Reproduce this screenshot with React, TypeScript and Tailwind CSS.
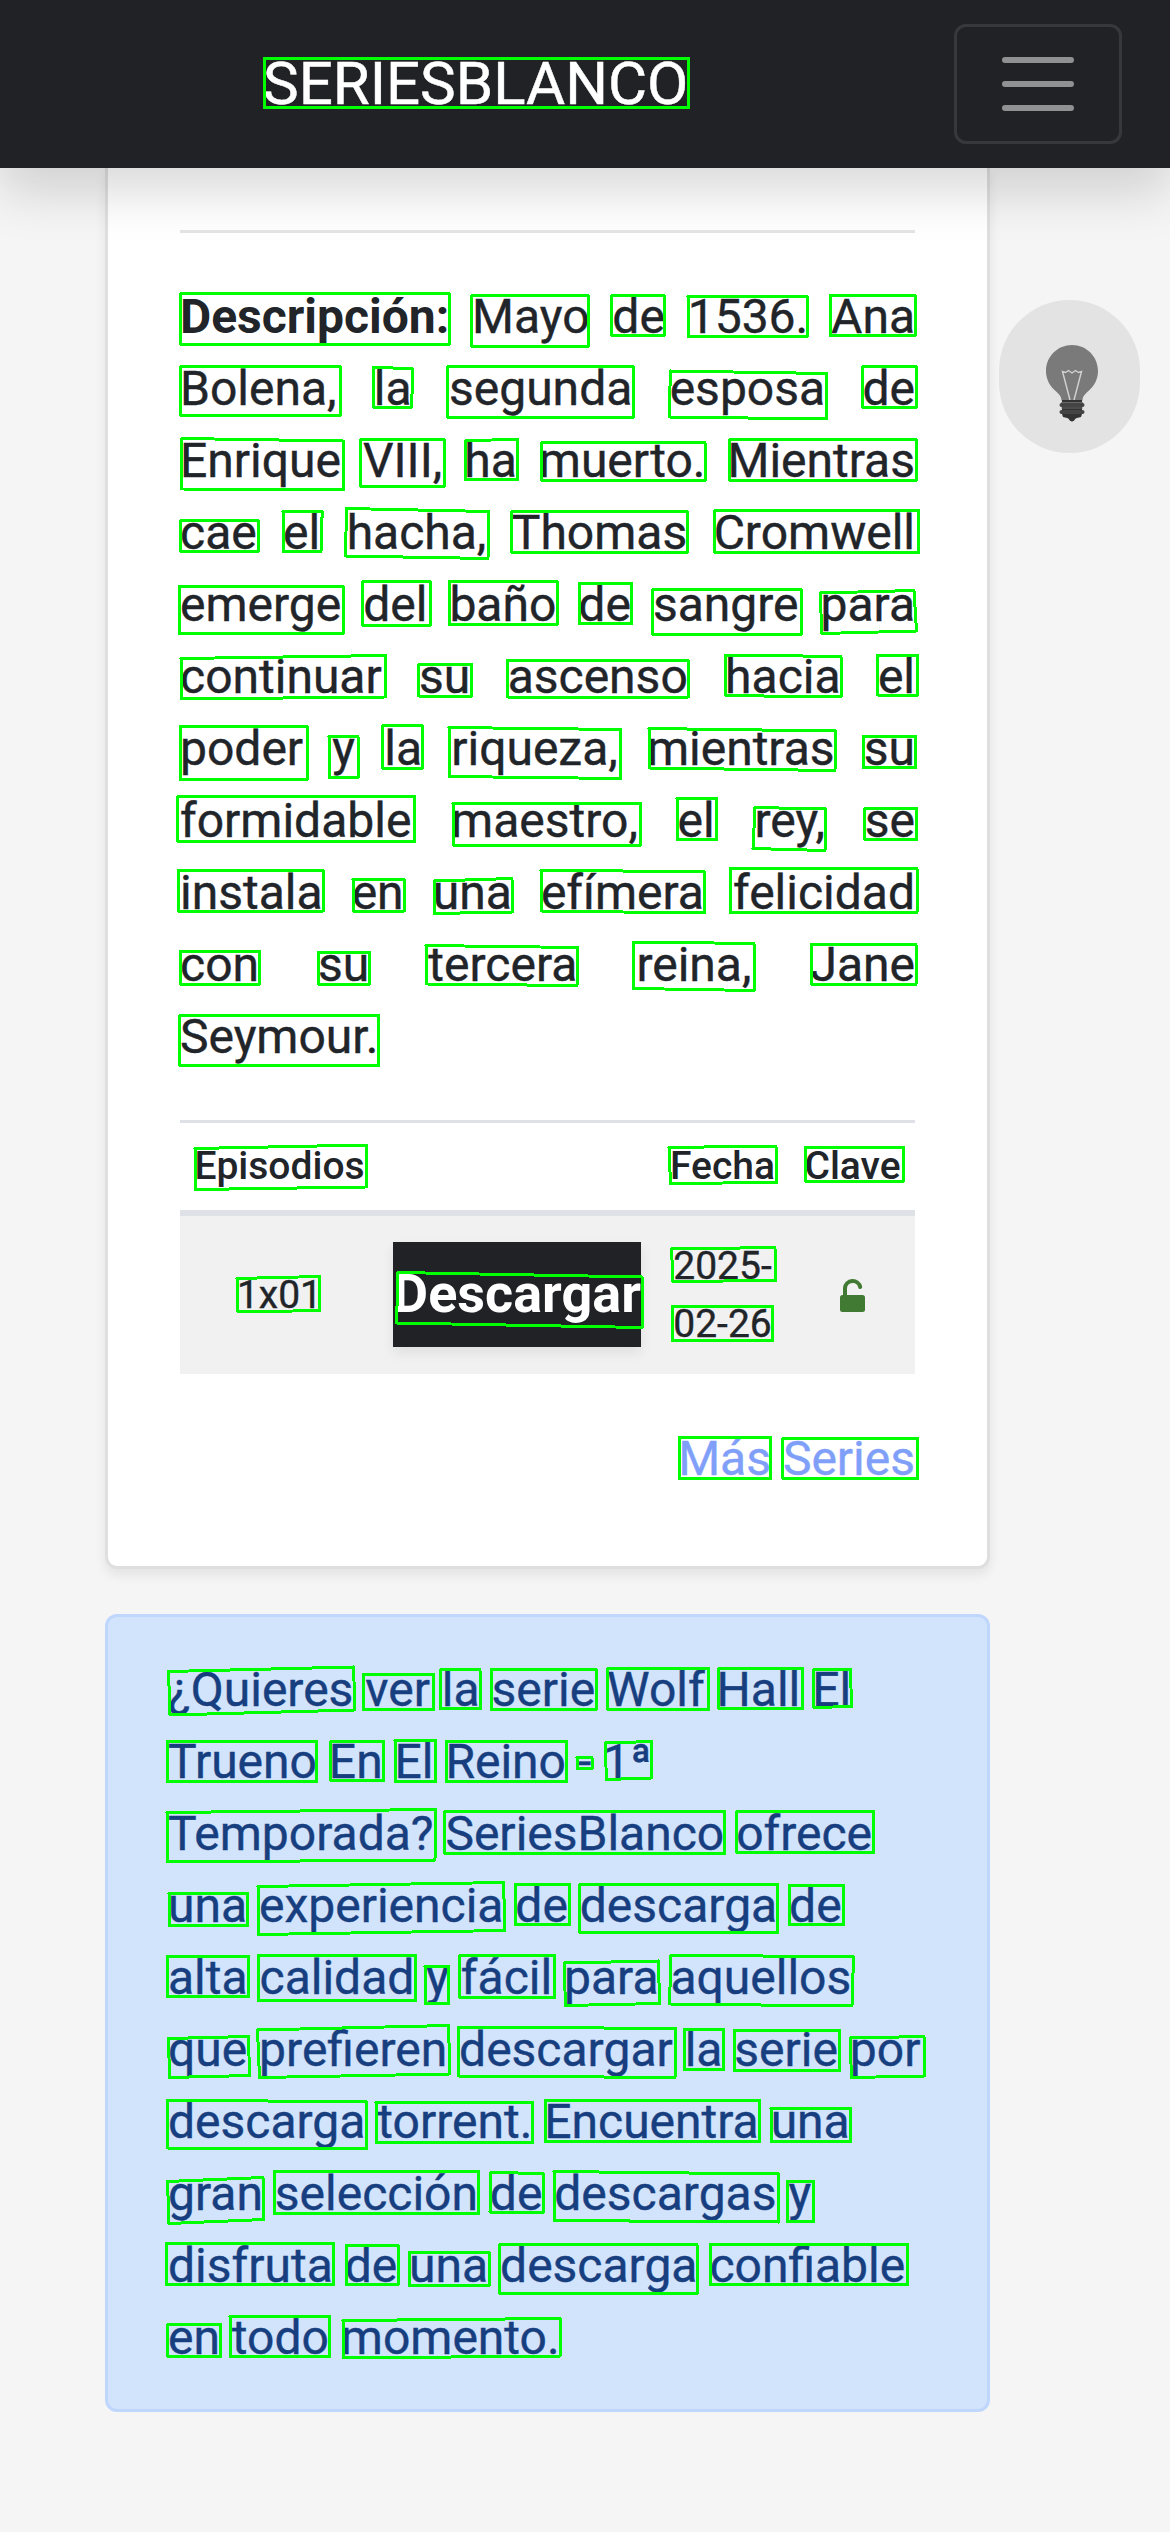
const BOXES: number[][] = [
  [264.2, 58.5, 688.7, 107.5],
  [180.8, 293.5, 449.2, 344.5], [471.8, 295.5, 588.2, 346.2], [611.7, 295.5, 664.3, 335.5], [688, 296.5, 807.2, 336.5], [830.5, 295.5, 915.1, 335.5],
  [180.8, 366.8, 340.2, 415.2], [373, 367, 413, 369, 411.5, 407, 373, 407], [447.8, 366.8, 633.2, 417.2], [670.5, 371, 826.4, 373.5, 826.4, 419, 669, 417], [862.9, 366.8, 916.2, 407.2],
  [181.8, 438.5, 343.2, 441, 343.2, 490, 181.8, 489], [360.8, 439.5, 444.2, 486.5], [466, 440.5, 517.5, 439.5, 517.5, 479.5, 465.5, 479.5], [541.8, 442.8, 705, 480.5], [729.8, 439.5, 916.2, 480.5],
  [180.8, 520.5, 258.2, 551.5], [283, 511.5, 322.2, 511.5, 321, 552, 283, 551.5], [346.5, 508.5, 489, 511.5, 488, 558.5, 345.5, 556], [511.8, 511.5, 687.2, 552.5], [714.9, 510.2, 918.4, 552.5],
  [179.5, 586.5, 343.2, 633.5], [362.8, 581.5, 430.2, 625.2], [449.5, 581.5, 557.2, 624.5], [579.5, 583.5, 631.8, 623.5], [652.8, 589.5, 801.3, 634.5], [820, 593, 914, 590.5, 916.5, 631, 822, 633.5],
  [181, 658.5, 385.5, 655.5, 385.5, 697, 181, 699], [418.8, 664.5, 471.5, 696], [507.5, 660.5, 688.3, 697], [725.8, 655, 841, 656.5, 841, 697, 725.8, 695.5], [877.8, 655, 917.7, 695],
  [180.4, 726.5, 307.2, 779.5], [329, 736.5, 358, 777.5], [382.9, 725.5, 422.1, 768.5], [449, 727.5, 620.6, 729.5, 620.6, 778.5, 449, 776.5], [649, 728.5, 835.5, 731, 835, 770.5, 649, 768], [863.4, 736.5, 915.6, 767.5],
  [177.9, 796.5, 414.7, 841.5], [453, 803.5, 640.5, 845], [677, 798.5, 716.6, 839.5], [755, 807.5, 826, 809, 825, 850.5, 753, 848.5], [864.9, 808.5, 916.6, 839.5],
  [178.4, 870.5, 323.2, 911], [353, 879.5, 404.2, 911], [434.5, 881, 512, 878.5, 512.5, 912, 434.5, 913.5], [541, 870.5, 704.2, 871.5, 704.2, 913, 541, 911], [730, 868.8, 917, 912.2],
  [180.4, 951.5, 259.5, 984.2], [318.2, 952.5, 369.4, 984.2], [426, 945.5, 578, 947.5, 577, 985.5, 426, 984], [633.6, 942, 754, 943.5, 754, 990.5, 633.6, 988.5], [811.2, 944.5, 916, 984.2],
  [179.9, 1015.5, 378.9, 1065.5],
  [195, 1148.5, 366.4, 1145, 366.4, 1187, 195, 1189.5], [669, 1147.5, 776, 1146, 776.8, 1182.5, 670.5, 1183.5], [805.2, 1147.5, 903.7, 1181],
  [237, 1278.5, 319.5, 1276.5, 320, 1310.5, 238, 1312], [398, 1272.5, 642, 1277, 642, 1327.5, 396.5, 1323], [671.5, 1249, 775, 1247.5, 775.5, 1280.5, 673, 1281.5], [672.5, 1306.5, 772.5, 1340.5],
  [679.4, 1437.5, 770.9, 1478.5], [782.7, 1438.5, 917.6, 1478.5],
  [168.5, 1671.5, 353.5, 1667, 355, 1710, 170, 1715], [363.5, 1674.5, 433.5, 1709.5], [441, 1669, 480, 1669, 480.5, 1708.5, 440.5, 1708.5], [491.5, 1669.5, 596.2, 1709.5], [607.8, 1668.5, 708.5, 1709.5], [718.8, 1668.5, 802.5, 1708.5], [814, 1669.5, 850.5, 1669.5, 851.5, 1706.5, 813.8, 1707.5],
  [167.5, 1741.5, 316.5, 1781.8], [330.8, 1741.5, 383.8, 1780.5], [395, 1740.5, 435.5, 1781.5], [446.5, 1741.5, 566.5, 1781.5], [577, 1757.5, 592, 1768.5], [605, 1743, 651.5, 1741.5, 651.5, 1778, 606.5, 1779.5],
  [167, 1812.5, 435.5, 1809.5, 435, 1860, 167, 1862], [444.8, 1811.5, 724.5, 1853.5], [736.8, 1811.5, 873.5, 1852.5],
  [169, 1893.5, 247.5, 1925.5], [258, 1886.5, 503.5, 1882.5, 505, 1930.5, 258, 1934.5], [515.5, 1884.5, 569.5, 1924.5], [579.8, 1884.5, 777.5, 1932.5], [789.5, 1885.5, 843.5, 1924.5],
  [167.5, 1956.5, 248.5, 1996.5], [258.5, 1955.2, 415.5, 2000.5], [425, 1966.5, 448.5, 2003.5], [459.8, 1955.2, 554.5, 1997.5], [564, 1963, 658.5, 1961, 659.5, 2003.5, 565.5, 2005.5], [671, 1955, 853.5, 1957, 852, 2006, 669.5, 2004],
  [168.5, 2038.5, 248.5, 2036.5, 249.5, 2075.5, 169.5, 2077.5], [257.5, 2030, 448.5, 2025.5, 450, 2074, 259.5, 2077.5], [458.8, 2027, 676, 2028.5, 675, 2077.5, 458.8, 2076], [684, 2029, 723.5, 2069.5], [734.5, 2030.5, 839.5, 2070.5], [850, 2038, 924, 2036.5, 925, 2076, 851.5, 2077.5],
  [167.8, 2100, 366.6, 2102, 366.6, 2149, 167.8, 2148], [376, 2102.5, 532.7, 2142.5], [545.6, 2100.5, 759.7, 2141.5], [771, 2108.5, 850.7, 2141.5],
  [167.5, 2181.5, 263, 2177.5, 264, 2219.5, 169, 2223.5], [274.6, 2171.5, 478.7, 2213.5], [491, 2172.5, 543.2, 2173.5, 543.2, 2212.5, 490, 2212], [554, 2171.5, 779, 2174, 778.5, 2222, 554, 2220.5], [787.4, 2181.5, 813.7, 2221.5],
  [166.6, 2243.5, 333.8, 2284.5], [346.2, 2245.5, 398.3, 2284.5], [409.5, 2252.5, 489.3, 2285.5], [499.9, 2244.5, 697, 2293.5], [710.5, 2244.5, 907.6, 2284.5],
  [167.8, 2324.5, 220.5, 2356.5], [230, 2316.5, 329.7, 2356.5], [343, 2320.5, 560, 2318.5, 560, 2356, 343, 2358],
];

function toPoints(b: number[]) {
  return (b.length === 4 ? [b[0], b[1], b[2], b[1], b[2], b[3], b[0], b[3]] : b).join(" ");
}

/** Outlines drawn over each detected word. */
function WordBoxes() {
  return (
    <svg className="pointer-events-none absolute top-0 left-0 z-30" width="1170" height="2532" viewBox="0 0 1170 2532" fill="none" stroke="#00ff00" strokeWidth="3" strokeLinejoin="round" shapeRendering="crispEdges">
      {BOXES.map((b, i) => (
        <polygon key={i} points={toPoints(b)} />
      ))}
    </svg>
  );
}

function Header() {
  return (
    <header className="relative z-10 flex h-[168px] items-center justify-between bg-[#212226] pr-12 pl-[263px] shadow-[0_24px_48px_rgba(0,0,0,0.15)]">
      <a className="text-[60px] leading-[90px] text-white [-webkit-text-stroke:0.5px]">SERIESBLANCO</a>
      <button className="flex h-[120px] w-[168px] items-center justify-center rounded-xl border-[3px] border-white/10">
        <svg width="90" height="90" viewBox="0 0 30 30" fill="none" stroke="#909193" strokeWidth="2" strokeLinecap="round">
          <path d="M4 7h22M4 15h22M4 23h22" />
        </svg>
      </button>
    </header>
  );
}

function Bulb() {
  return (
    <button className="absolute top-[300px] left-[999px] flex h-[153px] w-[141px] justify-center rounded-full bg-[#e3e3e3] pt-[45px] pl-[4px]">
      <svg width="52" height="77" viewBox="0 0 52 77" fill="none">
        <path d="M26 0C11.500 0 0 11.500 0 26c0 8 3.500 14.500 9 19.500 4 3.500 6.500 6 6.500 10h21c0-4 2.500-6.500 6.500-10 5.500-5 9-11.500 9-19.500C52 11.500 40.500 0 26 0z" fill="#7a7a7a" />
        <path d="M24 55 16.500 26.500l3 1 3-2 3.500 2.500 3.500-2.500 3 2 3-1L28 55" stroke="#d2d2d2" strokeWidth="1.400" />
        <path d="M16 55h20v14l-1 3-4 1c-2 0-2.500 3.500-5 3.500s-3-3.500-5-3.500l-4-1-1-3z" fill="#333" />
        <rect x="13.500" y="58" width="25" height="4" rx="2" fill="#444" />
        <rect x="13.500" y="65" width="25" height="4" rx="2" fill="#444" />
        <path d="M15 57.500h22M15 63h22" stroke="#777" strokeWidth="0.800" />
      </svg>
    </button>
  );
}

function Episodes() {
  return (
    <div className="mt-[47.5px] text-center text-[39px] leading-[58.5px]">
      <div className="grid grid-cols-[199px_276px_135px_125px] border-t-[3px] border-b-[6px] border-[#dee2e6] pt-[14px] pb-[14.5px] font-medium">
        <div>Episodios</div>
        <div />
        <div>Fecha</div>
        <div>Clave</div>
      </div>
      <div className="grid h-[158px] grid-cols-[199px_276px_135px_125px] items-center bg-[#f1f1f1] [-webkit-text-stroke:0.4px]">
        <div>1x01</div>
        <div className="mb-[1px] ml-[14px] flex h-[105px] w-[248px] items-center justify-center bg-[#212226] text-[54px] font-bold text-white shadow-[0_6px_12px_rgba(0,0,0,0.075)] [-webkit-text-stroke:0]">Descargar</div>
        <div>2025-<br />02-26</div>
        <div className="flex justify-center">
          <svg width="25" height="34" viewBox="0 0 25 34" fill="none">
            <rect y="17" width="25" height="17" rx="2.500" fill="#417a33" />
            <path d="M5 18V10a7.700 7.700 0 0 1 15.200-1" stroke="#417a33" strokeWidth="4" strokeLinecap="round" />
          </svg>
        </div>
      </div>
    </div>
  );
}

export default function App() {
  return (
    <div className="relative h-[2532px] w-[1170px] overflow-hidden bg-[#f5f5f5] font-['Roboto',sans-serif] text-[48px] leading-[72px] text-[#212529]">
      <Header />
      <main className="ml-[105px] w-[885px]">
        <section className="h-[1401px] rounded-b-xl border-[3px] border-t-0 border-[#dfdfdf] bg-white px-[72px] pt-[61.5px] shadow-[0_6px_12px_rgba(0,0,0,0.075)]">
          <hr className="mb-12 h-[3px] border-0 bg-[#e5e5e5]" />
          <p className="text-justify [-webkit-text-stroke:0.4px]">
            <b className="font-bold [-webkit-text-stroke:0]">Descripción:</b> Mayo de 1536. Ana Bolena, la segunda esposa de Enrique VIII, ha muerto. Mientras cae el hacha, Thomas Cromwell emerge del baño de sangre para continuar su ascenso hacia el poder y la riqueza, mientras su formidable maestro, el rey, se instala en una efímera felicidad con su tercera reina, Jane Seymour.
          </p>
          <Episodes />
          <div className="mt-[48.5px] text-right text-[#7f9ff9] [-webkit-text-stroke:0.4px]">Más Series</div>
        </section>
        <section className="mt-[45px] rounded-xl border-[3px] border-[#bfd7fc] bg-[#d2e3fc] px-[60px] pt-[37px] pb-[35px] text-[#173f80] [-webkit-text-stroke:0.4px]">
          ¿Quieres ver la serie Wolf Hall El Trueno En El Reino - 1ª Temporada? SeriesBlanco ofrece una experiencia de descarga de alta calidad y fácil para aquellos que prefieren descargar la serie por descarga torrent. Encuentra una gran selección de descargas y disfruta de una descarga confiable en todo momento.
        </section>
      </main>
      <Bulb />
      <WordBoxes />
    </div>
  );
}
